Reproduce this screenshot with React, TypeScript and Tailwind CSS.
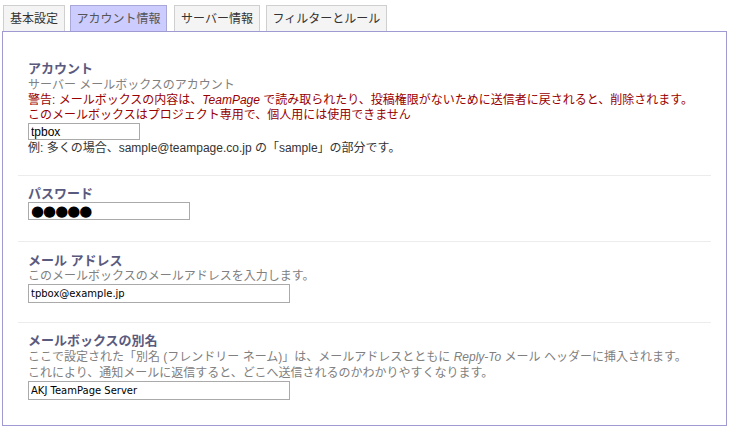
import React from 'react';

const FONT = { fontFamily: '"Liberation Sans", "Noto Sans CJK JP", sans-serif' };
const SMALL = { fontFamily: '"DejaVu Sans", sans-serif' };

const TABS = [
  { label: '基本設定', width: 'w-[62px]', gap: 'ml-[1px]', active: false },
  { label: 'アカウント情報', width: 'w-[97px]', gap: 'ml-[5px]', active: true },
  { label: 'サーバー情報', width: 'w-[86px]', gap: 'ml-[7px]', active: false },
  { label: 'フィルターとルール', width: 'w-[121px]', gap: 'ml-[6px]', active: false },
];

function Section({ pad, children }: { pad: string; children: React.ReactNode }) {
  return (
    <div className={pad}>
      <div className="pl-[10px] flex flex-col items-start">{children}</div>
    </div>
  );
}

function Heading({ children }: { children: React.ReactNode }) {
  return <div className="text-[13px] leading-[16px] font-bold text-[#5a5a7e]">{children}</div>;
}

export default function App() {
  return (
    <div className="w-[730px] h-[430px] bg-white pl-[2px] pt-[5px] text-[12px]" style={FONT}>
      <div className="flex items-end h-[26px]">
        {TABS.map((t) => (
          <div
            key={t.label}
            className={`${t.width} ${t.gap} h-[26px] flex items-center justify-center border border-b-0 text-[12px] ${
              t.active ? 'bg-[#ccccff] border-[#a8a8d8] text-[#555]' : 'bg-[#f4f4f4] border-[#cfcfcf] text-[#333]'
            }`}
          >
            {t.label}
          </div>
        ))}
      </div>

      <div className="w-[725px] h-[395px] border border-[#a09ad2] pt-[18px] px-[15px]">
        <Section pad="pt-[11px] pb-[19px]">
          <Heading>アカウント</Heading>
          <div className="leading-[16px] text-[#808080]">サーバー メールボックスのアカウント</div>
          <div className="leading-[15px] text-[#990000]">
            警告: メールボックスの内容は、<i>TeamPage</i> で読み取られたり、投稿権限がないために送信者に戻されると、削除されます。
          </div>
          <div className="leading-[15px] text-[#990000]">このメールボックスはプロジェクト専用で、個人用には使用できません</div>
          <input
            readOnly
            value="tpbox"
            className="w-[112px] h-[17px] border border-[#aaa] px-[2px] text-[12px] text-black outline-none"
            style={FONT}
          />
          <div className="leading-[16px] text-[#333]">例: 多くの場合、sample@teampage.co.jp の「sample」の部分です。</div>
        </Section>

        <Section pad="border-t border-[#ececec] pt-[10px] pb-[21px]">
          <Heading>パスワード</Heading>
          <div
            className="w-[162px] h-[18px] border border-[#aaa] px-[2px] flex items-center text-[15px] leading-none text-black tracking-[-1px]"
            style={SMALL}
          >
            ●●●●●
          </div>
        </Section>

        <Section pad="border-t border-[#ececec] pt-[11px] pb-[19px]">
          <Heading>メール アドレス</Heading>
          <div className="leading-[15px] text-[#808080]">このメールボックスのメールアドレスを入力します。</div>
          <input
            readOnly
            value="tpbox@example.jp"
            className="w-[262px] h-[19px] border border-[#aaa] px-[2px] text-[10px] text-black outline-none"
            style={SMALL}
          />
        </Section>

        <Section pad="border-t border-[#ececec] pt-[10px] pb-[20px]">
          <Heading>メールボックスの別名</Heading>
          <div className="leading-[16px] text-[#808080]">
            ここで設定された「別名 (フレンドリー ネーム)」は、メールアドレスとともに <i>Reply-To</i> メール ヘッダーに挿入されます。
          </div>
          <div className="leading-[16px] text-[#808080]">これにより、通知メールに返信すると、どこへ送信されるのかわかりやすくなります。</div>
          <input
            readOnly
            value="AKJ TeamPage Server"
            className="w-[262px] h-[19px] border border-[#aaa] px-[2px] text-[10px] text-black outline-none"
            style={SMALL}
          />
        </Section>
      </div>
    </div>
  );
}
